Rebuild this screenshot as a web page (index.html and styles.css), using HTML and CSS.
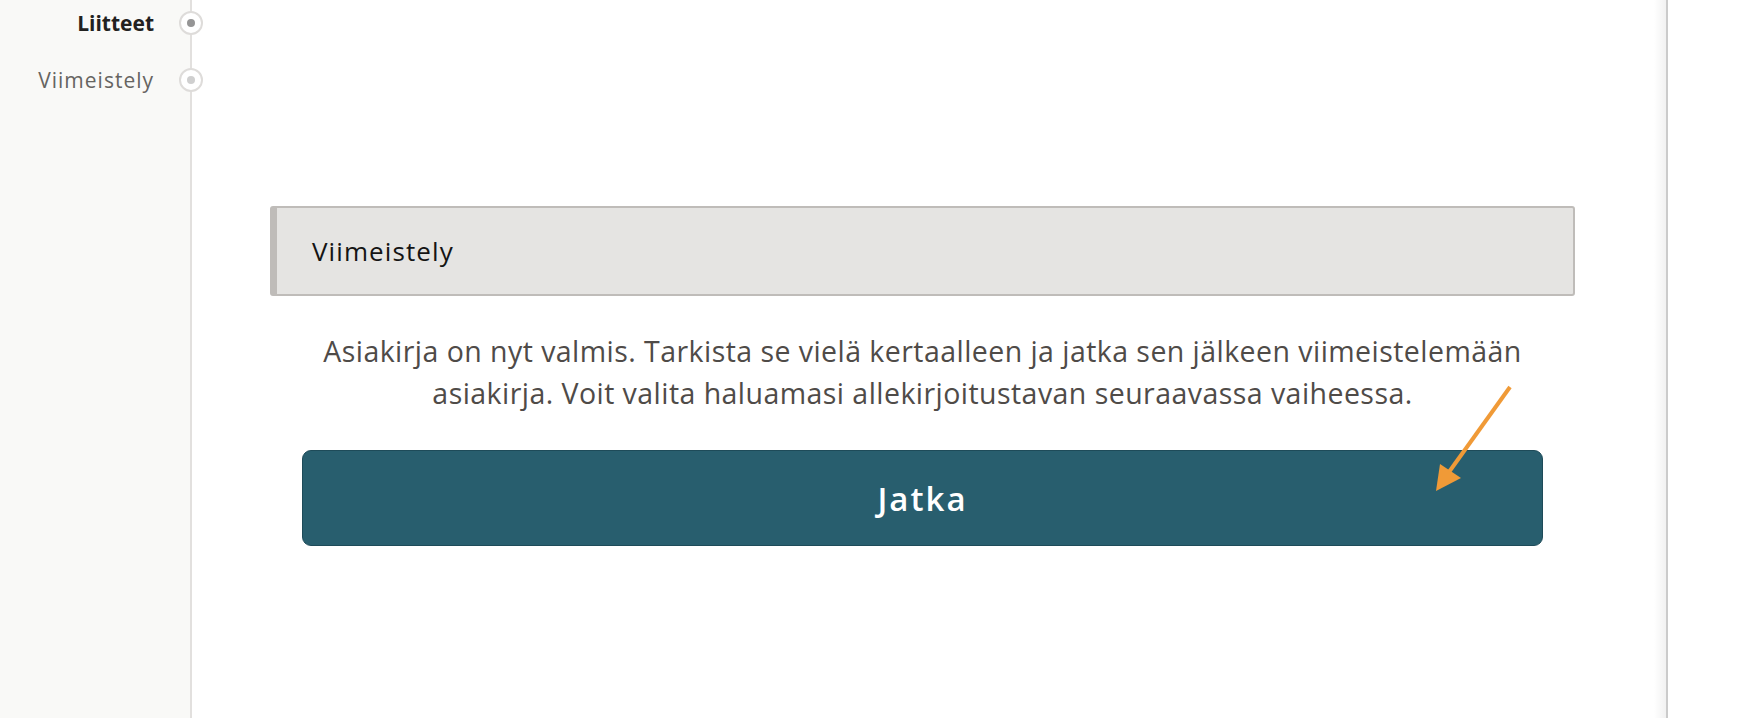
FILE: index.html
```html
<!DOCTYPE html>
<html lang="fi">
<head>
<meta charset="utf-8">
<title>Viimeistely</title>
<link rel="stylesheet" href="styles.css">
</head>
<body>
<div class="page">
  <aside class="sidebar">
    <ul class="steps">
      <li class="step step-done"><span class="step-label">Liitteet</span><span class="step-dot"><span class="dot-inner"></span></span></li>
      <li class="step step-next"><span class="step-label">Viimeistely</span><span class="step-dot"><span class="dot-inner"></span></span></li>
    </ul>
  </aside>
  <main class="main">
    <div class="content">
      <div class="section-head">Viimeistely</div>
      <p class="intro">Asiakirja on nyt valmis. Tarkista se vielä kertaalleen ja jatka sen jälkeen viimeistelemään asiakirja. Voit valita haluamasi allekirjoitustavan seuraavassa vaiheessa.</p>
      <button class="btn-continue" type="button">Jatka</button>
    </div>
  </main>
  <div class="gutter"></div>
</div>
<svg class="annotation" width="1744" height="718" viewBox="0 0 1744 718" aria-hidden="true">
  <line x1="1510" y1="387" x2="1449" y2="472" stroke="#f09a37" stroke-width="4" stroke-linecap="butt"/>
  <polygon points="1436,491 1440,464 1461,478" fill="#f09a37"/>
</svg>
</body>
</html>
```
FILE: styles.css
```css
html, body {
  margin: 0;
  padding: 0;
  background: #ffffff;
}
body {
  font-family: "Open Sans", "Liberation Sans", sans-serif;
  width: 1744px;
  height: 718px;
  overflow: hidden;
  position: relative;
}
.page {
  display: flex;
  height: 718px;
}
.sidebar {
  width: 190px;
  flex: 0 0 190px;
  background: #f9f9f7;
  border-right: 2px solid #e2e0de;
  position: relative;
  z-index: 1;
}
.steps {
  list-style: none;
  margin: -6px 0 0 0;
  padding: 0;
}
.step {
  display: flex;
  justify-content: flex-end;
  align-items: center;
  height: 57px;
  gap: 25px;
}
.step-label {
  font-size: 21px;
  letter-spacing: 1px;
  color: #666461;
}
.step-done .step-label {
  font-size: 21px;
  letter-spacing: 0;
  font-weight: 700;
  color: #222120;
}
.step-dot {
  width: 20px;
  height: 20px;
  border: 2px solid #dedcda;
  border-radius: 50%;
  background: #ffffff;
  margin-right: -13px;
  display: flex;
  align-items: center;
  justify-content: center;
}
.dot-inner {
  width: 8px;
  height: 8px;
  border-radius: 50%;
  background: #cfcfcf;
}
.step-done .dot-inner {
  background: #959595;
}
.main {
  flex: 0 0 1474px;
  background: linear-gradient(to left, rgba(0,0,0,0.055), rgba(0,0,0,0) 12px) #ffffff;
  border-right: 2px solid #cbcbcb;
}
.content {
  width: 1305px;
  margin: 206px 0 0 78px;
  display: flex;
  flex-direction: column;
}
.section-head {
  box-sizing: border-box;
  height: 90px;
  background: #e5e4e2;
  border: 2px solid #bfbcb9;
  border-left-width: 7px;
  border-radius: 3px;
  padding-left: 35px;
  display: flex;
  align-items: center;
  font-size: 26px;
  letter-spacing: 1.1px;
  color: #141414;
}
.intro {
  margin: 34px 0 0 0;
  text-align: center;
  font-size: 28.5px;
  letter-spacing: 0.45px;
  line-height: 42px;
  color: #4f4b48;
}
.btn-continue {
  margin: 36px 32px 0 32px;
  height: 96px;
  background: #285e6e;
  border: 1px solid #1e4b59;
  border-radius: 9px;
  color: #ffffff;
  font-family: "Open Sans", "Liberation Sans", sans-serif;
  font-weight: 600;
  font-size: 33px;
  letter-spacing: 2px;
  cursor: pointer;
}
.gutter {
  flex: 1 1 auto;
  background: #ffffff;
}
.annotation {
  position: absolute;
  left: 0;
  top: 0;
  pointer-events: none;
  z-index: 5;
}
```
